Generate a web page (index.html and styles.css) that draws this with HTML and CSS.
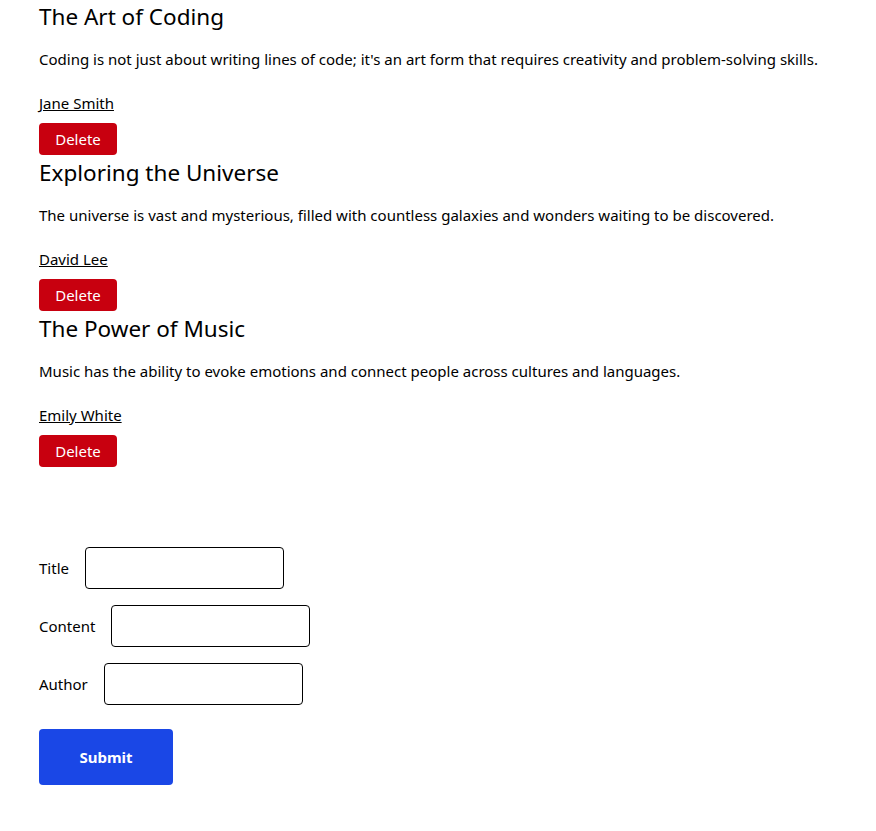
FILE: index.html
```html
<!DOCTYPE html>
<html>
<head>
<meta charset="utf-8">
<link rel="stylesheet" href="styles.css">
</head>
<body>
<div class="page">
  <div class="post">
    <h2 class="post-title">The Art of Coding</h2>
    <p class="post-content">Coding is not just about writing lines of code; it's an art form that requires creativity and problem-solving skills.</p>
    <a class="post-author" href="#">Jane Smith</a>
    <button class="btn-delete">Delete</button>
  </div>
  <div class="post">
    <h2 class="post-title">Exploring the Universe</h2>
    <p class="post-content">The universe is vast and mysterious, filled with countless galaxies and wonders waiting to be discovered.</p>
    <a class="post-author" href="#">David Lee</a>
    <button class="btn-delete">Delete</button>
  </div>
  <div class="post">
    <h2 class="post-title">The Power of Music</h2>
    <p class="post-content">Music has the ability to evoke emotions and connect people across cultures and languages.</p>
    <a class="post-author" href="#">Emily White</a>
    <button class="btn-delete">Delete</button>
  </div>

  <form class="post-form">
    <div class="field"><label>Title</label><input type="text"></div>
    <div class="field"><label>Content</label><input type="text"></div>
    <div class="field"><label>Author</label><input type="text"></div>
    <button type="button" class="btn-submit">Submit</button>
  </form>
</div>
</body>
</html>
```

FILE: styles.css
```css
html, body {
  margin: 0;
  padding: 0;
  background: #fff;
}
body {
  font-family: "Noto Sans", "Open Sans", sans-serif;
  font-size: 15px;
  color: #000;
}
.page {
  padding: 0 39px;
}
.post {
  display: flex;
  flex-direction: column;
  align-items: flex-start;
  padding-bottom: 1px;
}
.post-title {
  margin: 0;
  font-size: 22.5px;
  font-weight: 400;
  line-height: 34px;
}
.post-content {
  margin: 15px 0 0;
  line-height: 20px;
}
.post-author {
  margin-top: 24px;
  line-height: 20px;
  color: #000;
  text-decoration: underline;
}
.btn-delete {
  margin-top: 10px;
  width: 78px;
  height: 32px;
  border: none;
  border-radius: 4px;
  background: #c8000f;
  color: #fff;
  font-family: inherit;
  font-size: 15px;
  padding: 0;
}
.post-form {
  margin-top: 79px;
  display: flex;
  flex-direction: column;
  align-items: flex-start;
}
.field {
  display: flex;
  align-items: center;
  gap: 16px;
  margin-bottom: 16px;
}
.field label {
  line-height: 20px;
}
.field input {
  width: 199px;
  height: 42px;
  box-sizing: border-box;
  border: 1px solid #000;
  border-radius: 4px;
  font-family: inherit;
  font-size: 15px;
  padding: 0 8px;
}
.btn-submit {
  margin-top: 8px;
  width: 134px;
  height: 56px;
  border: none;
  border-radius: 4px;
  background: #1a47e6;
  color: #fff;
  font-family: inherit;
  font-size: 15px;
  font-weight: 700;
  padding: 0;
}
```
